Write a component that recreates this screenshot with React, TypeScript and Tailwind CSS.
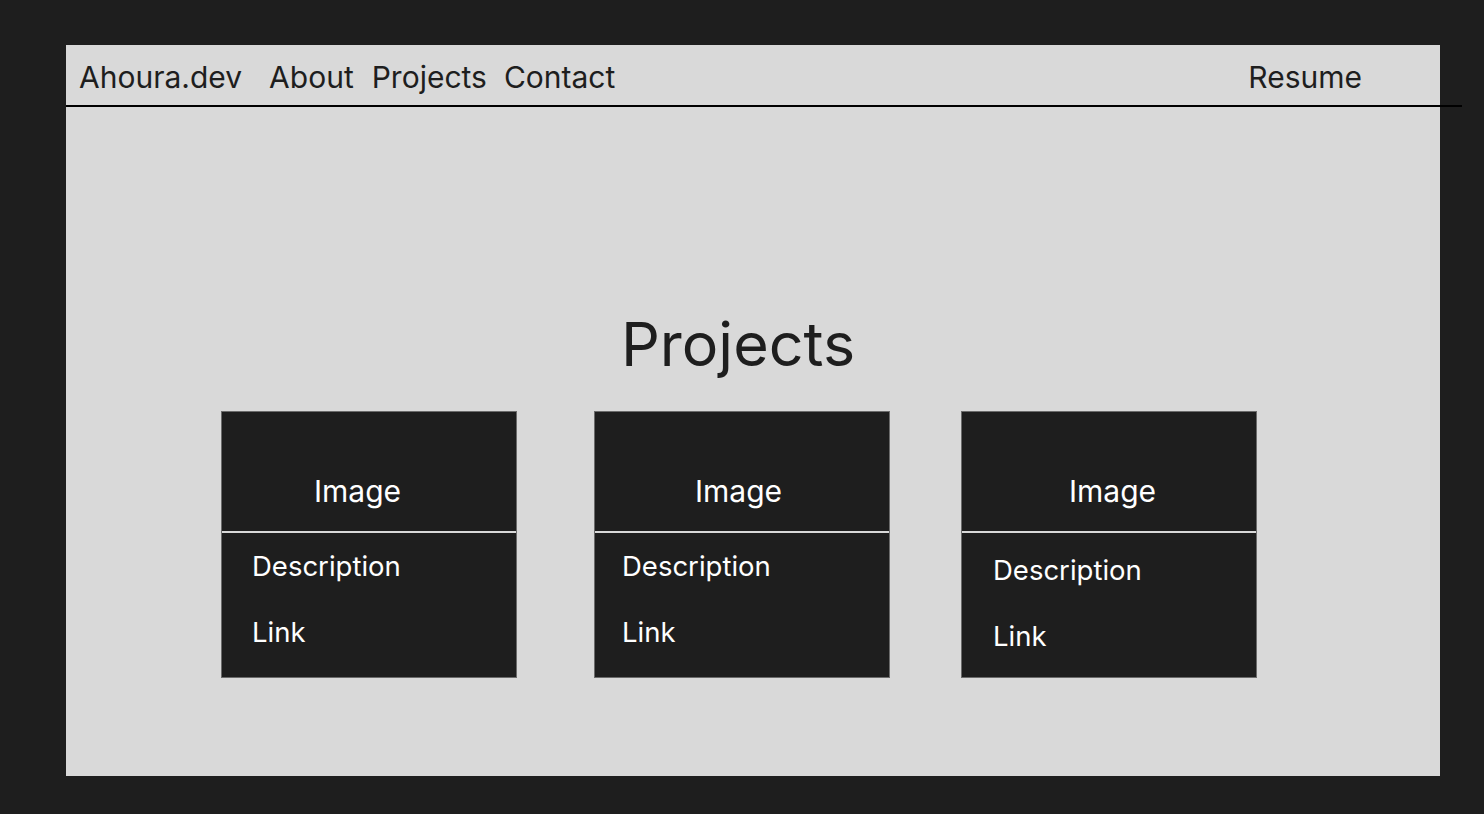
import React from 'react';

const projects = [
  { imgPad: 'pl-[92px]', bodyPad: 'pl-[30px] pt-[16px]' },
  { imgPad: 'pl-[100px]', bodyPad: 'pl-[27px] pt-[16px]' },
  { imgPad: 'pl-[107px]', bodyPad: 'pl-[31px] pt-[20px]' },
];

function ProjectCard({ imgPad, bodyPad }: { imgPad: string; bodyPad: string }) {
  return (
    <div className="w-[296px] h-[267px] bg-[#1e1e1e] border border-[#6b6b6b] flex flex-col text-white">
      <div className={`h-[119px] flex items-end pb-[22px] text-[30px] ${imgPad}`}>
        <span className="leading-[36px]">Image</span>
      </div>
      <div className="h-[2px] bg-[#d9d9d9]" />
      <div className={`flex flex-col gap-[32px] text-[27.5px] ${bodyPad}`}>
        <span className="leading-[34px]">Description</span>
        <span className="leading-[34px]">Link</span>
      </div>
    </div>
  );
}

export default function App() {
  return (
    <div
      className="min-h-screen bg-[#1e1e1e] pt-[45px] pl-[66px]"
      style={{ fontFamily: 'Inter, "Noto Sans", sans-serif' }}
    >
      <div className="w-[1374px] h-[731px] bg-[#d9d9d9] flex flex-col text-[#1e1e1e]">
        {/* Навигация */}
        <nav className="h-[60px] flex items-center pt-[4px] pl-[13px] pr-[78px] text-[30px]">
          <span>Ahoura.dev</span>
          <span className="ml-[27px]">About</span>
          <span className="ml-[18px]">Projects</span>
          <span className="ml-[17px]">Contact</span>
          <span className="ml-auto">Resume</span>
        </nav>
        <div className="h-[2px] w-[1396px] bg-black" />

        {/* Проекты */}
        <main className="flex flex-col">
          <h1 className="mt-[201px] text-[61px] leading-[72px] text-center pr-[30px]">Projects</h1>
          <div className="mt-[31px] flex pl-[155px] gap-[77px]">
            <ProjectCard {...projects[0]} />
            <ProjectCard {...projects[1]} />
            <div className="ml-[-6px]">
              <ProjectCard {...projects[2]} />
            </div>
          </div>
        </main>
      </div>
    </div>
  );
}
